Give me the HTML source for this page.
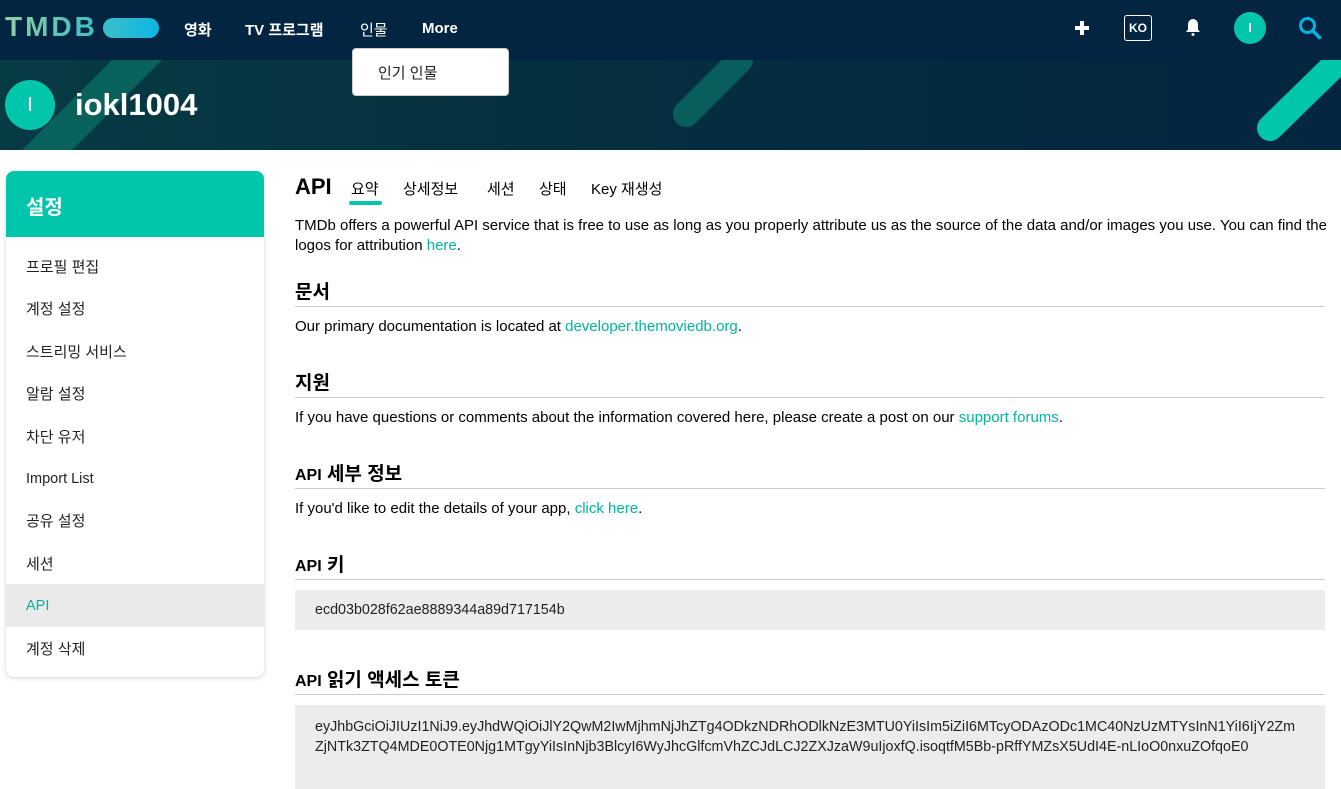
<!DOCTYPE html>
<html><head><meta charset="utf-8">
<style>
*{margin:0;padding:0;box-sizing:border-box}
body{width:1341px;height:789px;overflow:hidden;background:#fff;font-family:"Liberation Sans","Noto Sans CJK KR",sans-serif;color:#000;position:relative}
.a{position:absolute;white-space:nowrap}
.hdr{position:absolute;left:0;top:0;width:1341px;height:60px;background:#032541}
.ban{position:absolute;left:0;top:60px;width:1341px;height:90px;overflow:hidden;background:linear-gradient(90deg,#073b44 0%,#05303f 40%,#032541 100%)}
.nav{color:#fff;font-weight:bold;font-size:15px;top:19px}
.p{font-size:15px;color:#000}
.lk{color:#01b4a4}
.h{font-size:19px;font-weight:bold;left:295px}
.rule{position:absolute;left:295px;width:1030px;height:1px;background:#ccc}
.box{position:absolute;left:295px;width:1030px;background:#ececec}
.menu{position:absolute;left:26px;font-size:15px;color:#222}
</style></head><body>
<div class="hdr"></div>
<div class="a" style="left:5px;top:11px;font-size:28px;font-weight:bold;letter-spacing:3px;background:linear-gradient(90deg,#90cea1,#3cbec9);-webkit-background-clip:text;color:transparent">TMDB</div>
<div class="a" style="left:103px;top:18px;width:56px;height:20px;border-radius:10px;background:linear-gradient(90deg,#3cbec9,#0db6e3)"></div>
<div class="a nav" style="left:184px">영화</div>
<div class="a nav" style="left:245px">TV 프로그램</div>
<div class="a nav" style="left:360px;font-weight:normal">인물</div>
<div class="a nav" style="left:422px;top:20px">More</div>
<svg class="a" style="left:1073px;top:19px" width="18" height="18"><path d="M9 2v14M2 9h14" stroke="#fff" stroke-width="4"/></svg>
<div class="a" style="left:1124px;top:15px;width:28px;height:26px;border:1px solid #fff;border-radius:3px;color:#fff;font-size:12px;font-weight:bold;text-align:center;line-height:24px">KO</div>
<svg class="a" style="left:1185px;top:18px" width="16" height="20" viewBox="0 0 16 20"><path d="M8 1c-3 0-5 2.5-5 5.5v5L1 14h14l-2-2.5v-5C13 3.5 11 1 8 1z" fill="#fff"/><circle cx="8" cy="16.5" r="1.5" fill="#fff"/></svg>
<div class="a" style="left:1234px;top:12px;width:32px;height:32px;border-radius:50%;background:#01c6ac;color:#fff;font-size:13px;font-weight:bold;text-align:center;line-height:32px">I</div>
<svg class="a" style="left:1298px;top:16px" width="24" height="24"><circle cx="9.5" cy="9.5" r="7" fill="none" stroke="#01b4e4" stroke-width="3"/><path d="M14.5 14.5l7 7" stroke="#01b4e4" stroke-width="3.5" stroke-linecap="round"/></svg>

<div class="ban">
<svg width="1341" height="90" style="position:absolute;left:0;top:0">
<path d="M112 0h50l-90 90h-50z" fill="#0a6b63" opacity=".8"/>
<path d="M740 0L686 54" stroke="#0a6b63" stroke-width="26" stroke-linecap="round" opacity=".8"/>
<path d="M1350 -10L1270 68" stroke="#01c6ac" stroke-width="26" stroke-linecap="round"/>
</svg>
<div class="a" style="left:5px;top:20px;width:50px;height:50px;border-radius:50%;background:#01c6ac;color:#fff;font-size:20px;text-align:center;line-height:50px">I</div>
<div class="a" style="left:75px;top:27px;color:#fff;font-size:31px;font-weight:bold">iokl1004</div>
</div>
<div class="a" style="left:352px;top:48px;width:157px;height:48px;background:#fff;border:1px solid #ccc;border-radius:4px;font-size:15px;padding:13px 0 0 25px;color:#222">인기 인물</div>

<div class="a" style="left:6px;top:171px;width:258px;height:506px;border-radius:8px;box-shadow:0 1px 5px rgba(0,0,0,.18);overflow:hidden;background:#fff">
<div style="height:66px;background:#01c6ac;color:#fff;font-size:20px;font-weight:bold;padding:20px 0 0 20px">설정</div>
<div style="position:absolute;left:0;top:413px;width:258px;height:43px;background:#eaeaea"></div>
</div>
<div class="menu" style="top:256px">프로필 편집</div>
<div class="menu" style="top:298px">계정 설정</div>
<div class="menu" style="top:341px">스트리밍 서비스</div>
<div class="menu" style="top:383px">알람 설정</div>
<div class="menu" style="top:426px">차단 유저</div>
<div class="menu" style="top:471px;font-size:14.5px">Import List</div>
<div class="menu" style="top:510px">공유 설정</div>
<div class="menu" style="top:553px">세션</div>
<div class="menu" style="top:598px;color:#01b4a4;font-size:14.5px">API</div>
<div class="menu" style="top:638px">계정 삭제</div>

<div class="a" style="left:295px;top:174px;font-size:22px;font-weight:bold">API</div>
<div class="a" style="left:351px;top:178px;font-size:15px">요약</div>
<div class="a" style="left:349px;top:201px;width:33px;height:4px;background:#01c6ac;border-radius:2px"></div>
<div class="a" style="left:403px;top:178px;font-size:15px">상세정보</div>
<div class="a" style="left:487px;top:178px;font-size:15px">세션</div>
<div class="a" style="left:539px;top:178px;font-size:15px">상태</div>
<div class="a" style="left:591px;top:178px;font-size:15px">Key 재생성</div>

<div class="a p" style="left:295px;top:216px;line-height:20px">TMDb offers a powerful API service that is free to use as long as you properly attribute us as the source of the data and/or images you use. You can find the<br>logos for attribution <span class="lk">here</span>.</div>

<div class="a h" style="top:277px">문서</div>
<div class="rule" style="top:306px"></div>
<div class="a p" style="left:295px;top:318px">Our primary documentation is located at <span class="lk">developer.themoviedb.org</span>.</div>

<div class="a h" style="top:368px">지원</div>
<div class="rule" style="top:397px"></div>
<div class="a p" style="left:295px;top:409px">If you have questions or comments about the information covered here, please create a post on our <span class="lk">support forums</span>.</div>

<div class="a h" style="top:459px"><span style="font-size:16px">API</span> 세부 정보</div>
<div class="rule" style="top:488px"></div>
<div class="a p" style="left:295px;top:500px">If you'd like to edit the details of your app, <span class="lk">click here</span>.</div>

<div class="a h" style="top:550px"><span style="font-size:16px">API</span> 키</div>
<div class="rule" style="top:579px"></div>
<div class="box" style="top:590px;height:40px"></div>
<div class="a p" style="left:315px;top:602px;font-size:14.3px;color:#222">ecd03b028f62ae8889344a89d717154b</div>

<div class="a h" style="top:665px"><span style="font-size:16px">API</span> 읽기 액세스 토큰</div>
<div class="rule" style="top:694px"></div>
<div class="box" style="top:705px;height:84px"></div>
<div class="a p" style="left:315px;top:717px;font-size:14.3px;line-height:20px;color:#222">eyJhbGciOiJIUzI1NiJ9.eyJhdWQiOiJlY2QwM2IwMjhmNjJhZTg4ODkzNDRhODlkNzE3MTU0YiIsIm5iZiI6MTcyODAzODc1MC40NzUzMTYsInN1YiI6IjY2Zm<br>ZjNTk3ZTQ4MDE0OTE0Njg1MTgyYiIsInNjb3BlcyI6WyJhcGlfcmVhZCJdLCJ2ZXJzaW9uIjoxfQ.isoqtfM5Bb-pRffYMZsX5UdI4E-nLIoO0nxuZOfqoE0</div>
</body></html>
